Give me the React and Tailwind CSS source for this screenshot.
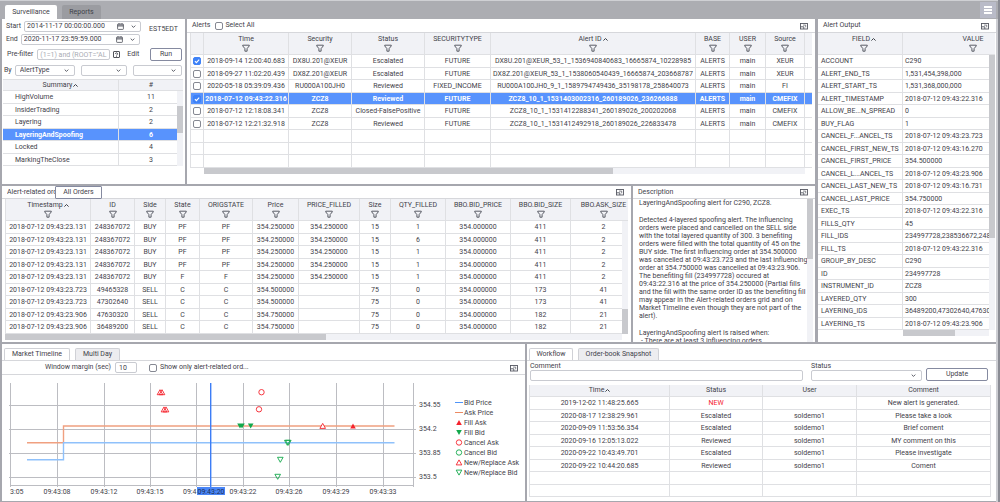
import React from "react";

const summary = [
  ["HighVolume", 11],
  ["InsiderTrading", 2],
  ["Layering", 2],
  ["LayeringAndSpoofing", 6],
  ["Locked", 4],
  ["MarkingTheClose", 3],
];

const alerts = [
  ["2018-09-14 12:00:40.683", "DX8U.201@XEUR", "Escalated", "FUTURE", "DX8U.201@XEUR_53_1_1536940840683_16665874_10228985", "ALERTS", "main", "XEUR"],
  ["2018-09-27 11:02:20.439", "DX8Z.201@XEUR", "Escalated", "FUTURE", "DX8Z.201@XEUR_53_1_1538060540439_16665874_203668787", "ALERTS", "main", "XEUR"],
  ["2020-05-18 05:39:09.436", "RU000A100JH0", "Reviewed", "FIXED_INCOME", "RU000A100JH0_9_1_1589794749436_35198178_258640073", "ALERTS", "main", "FI"],
  ["2018-07-12 09:43:22.316", "ZCZ8", "Reviewed", "FUTURE", "ZCZ8_10_1_1531403002316_260189026_236266888", "ALERTS", "main", "CMEFIX"],
  ["2018-07-12 12:18:08.341", "ZCZ8", "Closed-FalsePositive", "FUTURE", "ZCZ8_10_1_1531412288341_260189026_200202068", "ALERTS", "main", "CMEFIX"],
  ["2018-07-12 12:21:32.918", "ZCZ8", "Reviewed", "FUTURE", "ZCZ8_10_1_1531412492918_260189026_226833478", "ALERTS", "main", "CMEFIX"],
];

const output = [
  ["ACCOUNT", "C290"],
  ["ALERT_END_TS", "1,531,454,398,000"],
  ["ALERT_START_TS", "1,531,368,000,000"],
  ["ALERT_TIMESTAMP", "2018-07-12 09:43:22.316"],
  ["ALLOW_BE...N_SPREAD", "0"],
  ["BUY_FLAG", "1"],
  ["CANCEL_F...ANCEL_TS", "2018-07-12 09:43:23.723"],
  ["CANCEL_FIRST_NEW_TS", "2018-07-12 09:43:16.270"],
  ["CANCEL_FIRST_PRICE", "354.500000"],
  ["CANCEL_L...ANCEL_TS", "2018-07-12 09:43:23.906"],
  ["CANCEL_LAST_NEW_TS", "2018-07-12 09:43:16.731"],
  ["CANCEL_LAST_PRICE", "354.750000"],
  ["EXEC_TS", "2018-07-12 09:43:22.316"],
  ["FILLS_QTY", "45"],
  ["FILL_IDS", "234997728,238536672,248"],
  ["FILL_TS", "2018-07-12 09:43:22.316"],
  ["GROUP_BY_DESC", "C290"],
  ["ID", "234997728"],
  ["INSTRUMENT_ID", "ZCZ8"],
  ["LAYERED_QTY", "300"],
  ["LAYERING_IDS", "36489200,47302640,47630"],
  ["LAYERING_TS", "2018-07-12 09:43:23.906"],
];

const orders = [
  ["2018-07-12 09:43:23.131", "248367072", "BUY", "PF", "PF", "354.250000", "354.250000", 15, 1, "354.000000", 411, 2],
  ["2018-07-12 09:43:23.131", "248367072", "BUY", "PF", "PF", "354.250000", "354.250000", 15, 6, "354.000000", 411, 2],
  ["2018-07-12 09:43:23.131", "248367072", "BUY", "PF", "PF", "354.250000", "354.250000", 15, 1, "354.000000", 411, 2],
  ["2018-07-12 09:43:23.131", "248367072", "BUY", "PF", "PF", "354.250000", "354.250000", 15, 1, "354.000000", 411, 2],
  ["2018-07-12 09:43:23.131", "248367072", "BUY", "F", "F", "354.250000", "354.250000", 15, 1, "354.000000", 411, 2],
  ["2018-07-12 09:43:23.723", "49465328", "SELL", "C", "C", "354.500000", "", 75, 0, "354.000000", 173, 41],
  ["2018-07-12 09:43:23.723", "47302640", "SELL", "C", "C", "354.500000", "", 75, 0, "354.000000", 173, 41],
  ["2018-07-12 09:43:23.906", "47630320", "SELL", "C", "C", "354.750000", "", 75, 0, "354.000000", 182, 21],
  ["2018-07-12 09:43:23.906", "36489200", "SELL", "C", "C", "354.750000", "", 75, 0, "354.000000", 182, 21],
];

const workflow = [
  ["2019-12-02 11:48:25.665", "NEW", "", "New alert is generated."],
  ["2020-08-17 12:38:29.961", "Escalated", "soldemo1", "Please take a look"],
  ["2020-09-09 11:53:56.354", "Escalated", "soldemo1", "Brief coment"],
  ["2020-09-16 12:05:13.022", "Reviewed", "soldemo1", "MY comment on this"],
  ["2020-09-22 10:43:49.701", "Escalated", "soldemo1", "Please investigate"],
  ["2020-09-22 10:44:20.685", "Reviewed", "soldemo1", "Coment"],
  ["", "", "", ""],
  ["", "", "", ""],
];

const tableCls = "w-full table-fixed border-separate border-spacing-0 whitespace-nowrap";
const thCls = "bg-[#f1f2f6] border-b border-r border-[#dfe0e3] p-0 font-normal text-center align-middle overflow-hidden";
const tdCls = "border-b border-r border-[#dfe0e3] p-0 text-center align-middle leading-[10px] overflow-hidden";
const rowCls = "odd:h-[13px] even:h-[12px]";
const boxCls = "border border-[#c9cbd1] rounded-[2px] bg-white";

function Funnel() {
  return (
    <svg className="w-2 h-2" viewBox="0 0 8 8" fill="none" stroke="#4a4d57" strokeWidth="0.9" strokeLinejoin="round">
      <path d="M0.7 1.2h6.6v0.7L5.1 4.6v2.6H2.9V4.6L0.7 1.9z" />
    </svg>
  );
}

function SortUp() {
  return (
    <svg className="w-[5px] h-[5px]" viewBox="0 0 5 5" fill="none" stroke="#3f424a" strokeWidth="1">
      <path d="M0.4 3.6L2.5 1.5l2.1 2.1" />
    </svg>
  );
}

function Chevron() {
  return (
    <svg className="w-[5px] h-[5px]" viewBox="0 0 5 5" fill="none" stroke="#4a4d57" strokeWidth="0.9">
      <path d="M0.7 1.6L2.5 3.4l1.8-1.8" />
    </svg>
  );
}

function CalendarIcon() {
  return (
    <svg className="w-[7px] h-[7px]" viewBox="0 0 7 7" fill="none" stroke="#4a4d57" strokeWidth="0.8">
      <rect x="0.6" y="1" width="5.8" height="5.4" rx="0.6" />
      <path d="M0.6 2h5.8M0.6 3h5.8M2 0.2v1M5 0.2v1" />
    </svg>
  );
}

function PopOut() {
  return (
    <button aria-label="Pop out" className="ml-auto">
      <svg className="w-2 h-2" viewBox="0 0 8 8" fill="none" stroke="#555862" strokeWidth="0.9">
        <rect x="0.5" y="1.5" width="7" height="5.5" />
        <path d="M3.8 7V4.8H0.6" />
        <path d="M3 3.1h2.7v2.2" strokeWidth="0.7" />
      </svg>
    </button>
  );
}

function Head({ label, sort, filter = true, className = "" }) {
  return (
    <div className={`flex flex-col items-center ${className}`}>
      <span className="flex items-center gap-px leading-[9px]">
        {label}
        {sort && <SortUp />}
      </span>
      {filter && <Funnel />}
    </div>
  );
}

function Tick({ id, checked, label }) {
  return (
    <span className="relative inline-flex w-2 h-2 align-middle">
      <input
        id={id}
        type="checkbox"
        defaultChecked={checked}
        aria-label={label}
        className="peer appearance-none w-2 h-2 border border-[#858892] rounded-[2px] bg-white checked:bg-[#3f82f7] checked:border-[#3f82f7]"
      />
      <svg className="absolute inset-0 hidden peer-checked:block pointer-events-none" viewBox="0 0 8 8" fill="none" stroke="#fff" strokeWidth="1.1">
        <path d="M1.9 4.1l1.5 1.5 2.8-3" />
      </svg>
    </span>
  );
}

function DateField({ id, label, value, className }) {
  return (
    <div className="flex items-center gap-[3px]">
      <label htmlFor={id}>{label}</label>
      <div className={`flex items-center h-[11px] pl-[2px] pr-[4px] ${boxCls} ${className}`}>
        <input id={id} defaultValue={value} className="flex-1 min-w-0 h-[9px] outline-none" />
        <span className="flex items-center gap-[7px] pl-[12px]">
          <CalendarIcon />
          <Chevron />
        </span>
      </div>
    </div>
  );
}

function Dropdown({ id, value = "", label, className = "" }) {
  return (
    <div className={`relative ${className}`}>
      <select id={id} aria-label={label} className={`appearance-none block w-full h-[11px] pl-1 leading-[9px] ${boxCls}`}>
        <option>{value}</option>
      </select>
      <span className="absolute right-[6px] top-[3px] pointer-events-none">
        <Chevron />
      </span>
    </div>
  );
}

function Title({ children, className = "h-[14px]" }) {
  return <div className={`flex shrink-0 items-center pl-[5px] pr-[7px] border-b border-[#d6d7db] ${className}`}>{children}</div>;
}

function SummaryPanel() {
  return (
    <section className="bg-white overflow-hidden">
      <div className="flex pl-1 pt-[2px]">
        <div className="flex flex-col gap-[2px]">
          <DateField id="start" label="Start" value="2014-11-17 00:00:00.000" className="w-[117px]" />
          <DateField id="end" label="End" value="2020-11-17 23:59:59.000" className="w-[119px]" />
        </div>
        <span className="pl-2 pt-[4px]">EST5EDT</span>
      </div>
      <div className="flex items-center pl-[5px] pr-[3px] pt-[3px]">
        <label htmlFor="prefilter">Pre-filter</label>
        <input id="prefilter" disabled value={'(1=1) and (ROOT="AL'} className={`ml-[4px] w-[73px] h-[11px] pl-[2px] text-[#a9abb3] ${boxCls}`} />
        <svg className="ml-[3px] w-[7px] h-[7px]" viewBox="0 0 7 7" fill="none" stroke="#3f424a" strokeWidth="0.9">
          <rect x="0.5" y="0.5" width="6" height="6" rx="0.5" />
          <path d="M2.4 2.9c0-1.4 2.2-1.4 2.2 0 0 .8-1.1.8-1.1 1.6M3.5 5.2v.7" />
        </svg>
        <button className="ml-[7px]">Edit</button>
        <button className="ml-auto w-8 h-[13px] border border-[#858aa0] rounded-[2px] bg-white">Run</button>
      </div>
      <div className="flex items-center gap-[6px] pl-[2px] pr-[3px] pt-[4px]">
        <div className="flex items-center gap-[3px]">
          <label htmlFor="by1">By</label>
          <Dropdown id="by1" value="AlertType" className="w-[60px]" />
        </div>
        <Dropdown id="by2" label="Then by" className="w-[46px]" />
        <Dropdown id="by3" label="Finally by" className="flex-1" />
      </div>
      <div className="pl-px pr-[2px] pt-[3px]">
        <table className={tableCls}>
          <colgroup>
            <col className="w-[116px]" />
            <col />
            <col className="w-[6px]" />
          </colgroup>
          <thead>
            <tr className="h-[12px]">
              <th className={`${thCls} border-t`}><Head label="Summary" sort filter={false} /></th>
              <th colSpan={2} className={`${thCls} border-t border-r-0`}><Head label="#" filter={false} /></th>
            </tr>
          </thead>
          <tbody>
            {summary.map(([name, n], i) => {
              const on = name === "LayeringAndSpoofing";
              return (
                <tr key={name} className={`${rowCls} ${on ? "bg-[#5893fd] text-white font-bold" : ""}`}>
                  <td className={`${tdCls} text-left pl-3`}>{name}</td>
                  <td className={`${tdCls} border-r-0 pl-[6px]`}>{n}</td>
                  {i === 0 && (
                    <td rowSpan={6} className="p-0 pt-[15px] align-top bg-[#f1f2f6]">
                      <div className="h-[27px] bg-[#c8c9cd]" />
                    </td>
                  )}
                </tr>
              );
            })}
          </tbody>
        </table>
      </div>
    </section>
  );
}

function AlertsPanel() {
  const heads = ["Time", "Security", "Status", "SECURITYTYPE", "Alert ID", "BASE", "USER", "Source"];
  return (
    <section className="bg-white overflow-hidden">
      <Title>
        <span>Alerts</span>
        <span className="flex items-center gap-[2px] pl-[5px]">
          <Tick id="all" />
          <label htmlFor="all">Select All</label>
        </span>
        <PopOut />
      </Title>
      <div className="pl-[3px] pr-[3px]">
        <table className={tableCls}>
          <colgroup>
            <col className="w-[14px]" />
            <col className="w-[85px]" />
            <col className="w-[63px]" />
            <col className="w-[73px]" />
            <col className="w-[66px]" />
            <col />
            <col className="w-[34px]" />
            <col className="w-[36px]" />
            <col className="w-[39px]" />
            <col className="w-[7px]" />
          </colgroup>
          <thead>
            <tr className="h-[22px]">
              <th className={`${thCls} border-l`} />
              {heads.map((h) => (
                <th key={h} className={thCls}><Head label={h} sort={h === "Alert ID"} /></th>
              ))}
              <th className={`${thCls} border-r-0`} />
            </tr>
          </thead>
          <tbody>
            {Array.from({ length: 9 }, (_, i) => {
              const row = alerts[i] || Array(8).fill("");
              return (
                <tr key={i} className={`${rowCls} ${i === 3 ? "bg-[#5893fd] text-white font-bold" : ""}`}>
                  <td className={`${tdCls} border-l`}>
                    {alerts[i] && (
                      <span className="flex justify-center">
                        <Tick checked={i === 0 || i === 3} label={`Select alert ${i + 1}`} />
                      </span>
                    )}
                  </td>
                  {row.map((c, j) => (
                    <td key={j} className={tdCls}>{c}</td>
                  ))}
                  <td className={`${tdCls} border-r-0`} />
                </tr>
              );
            })}
          </tbody>
        </table>
        <div className="flex ml-[14px] mr-[7px] h-[6px] bg-[#f1f2f6]">
          <div className="w-[68%] bg-[#c8c9cd]" />
        </div>
      </div>
    </section>
  );
}

function OrdersPanel() {
  const heads = ["Timestamp", "ID", "Side", "State", "ORIGSTATE", "Price", "PRICE_FILLED", "Size", "QTY_FILLED", "BBO.BID_PRICE", "BBO.BID_SIZE"];
  return (
    <section className="bg-white overflow-hidden">
      <Title className="h-[13px]">
        <span className="w-[48px] overflow-hidden whitespace-nowrap">Alert-related ord</span>
        <button className="w-[47px] h-[13px] shrink-0 border border-[#858aa0] rounded-[1px] bg-white">All Orders</button>
        <PopOut />
      </Title>
      <div className="pl-[3px] pr-[3px]">
        <table className={tableCls}>
          <colgroup>
            <col className="w-[86px]" />
            <col className="w-[44px]" />
            <col className="w-[31px]" />
            <col className="w-[34px]" />
            <col className="w-[53px]" />
            <col className="w-[46px]" />
            <col className="w-[61px]" />
            <col className="w-[31px]" />
            <col className="w-[55px]" />
            <col className="w-[65px]" />
            <col className="w-[60px]" />
            <col />
            <col className="w-[6px]" />
          </colgroup>
          <thead>
            <tr className="h-[22px]">
              {heads.map((h, i) => (
                <th key={h} className={`${thCls} first:border-l`}><Head label={h} sort={i === 0} /></th>
              ))}
              <th colSpan={2} className={`${thCls} border-r-0 pl-[8px]`}><Head label="BBO.ASK_SIZE" /></th>
            </tr>
          </thead>
          <tbody>
            {orders.map((row, i) => (
              <tr key={i} className={rowCls}>
                {row.map((c, j) => (
                  <td key={j} className={`${tdCls} first:border-l ${j === 11 ? "border-r-0 pl-[14px]" : ""}`}>{c}</td>
                ))}
                {i === 0 && (
                  <td rowSpan={9} className="p-0 align-bottom bg-[#f1f2f6]">
                    <div className="h-[25px] bg-[#c8c9cd]" />
                  </td>
                )}
              </tr>
            ))}
          </tbody>
        </table>
        <div className="flex mr-[6px] h-[6px] bg-[#f1f2f6]">
          <div className="w-[52%] bg-[#c8c9cd]" />
        </div>
      </div>
    </section>
  );
}

function DescriptionPanel() {
  return (
    <section className="bg-white overflow-hidden">
      <Title className="h-[13px]">
        <span>Description</span>
        <PopOut />
      </Title>
      <div className="flex h-[143px] pr-[2px]">
        <div className="flex-1 min-w-0 pl-[6px] leading-[8px] overflow-hidden whitespace-nowrap">
          <p>LayeringAndSpoofing alert for C290, ZCZ8.</p>
          <p className="mt-[9px]">
            Detected 4-layered spoofing alert. The influencing<br />
            orders were placed and cancelled on the SELL side<br />
            with the total layered quantity of 300. 3 benefiting<br />
            orders were filled with the total quantity of 45 on the<br />
            BUY side. The first influencing order at 354.500000<br />
            was cancelled at 09:43:23.723 and the last influencing<br />
            order at 354.750000 was cancelled at 09:43:23.906.<br />
            The benefiting fill (234997728) occured at<br />
            09:43:22.316 at the price of 354.250000 (Partial fills<br />
            and the fill with the same order ID as the benefiting fill<br />
            may appear in the Alert-related orders grid and on<br />
            Market Timeline even though they are not part of the<br />
            alert).
          </p>
          <p className="mt-[9px]">LayeringAndSpoofing alert is raised when:</p>
          <p className="pl-[2px]">- There are at least 3 influencing orders</p>
        </div>
        <div className="w-[6px] bg-[#f1f2f6]">
          <div className="h-[60px] bg-[#c8c9cd]" />
        </div>
      </div>
    </section>
  );
}

function OutputPanel() {
  return (
    <section className="flex flex-col bg-white overflow-hidden">
      <Title>
        <span>Alert Output</span>
        <PopOut />
      </Title>
      <div className="pr-px">
        <table className={tableCls}>
          <colgroup>
            <col className="w-[85px]" />
            <col />
            <col className="w-[6px]" />
          </colgroup>
          <thead>
            <tr className="h-[22px]">
              <th className={thCls}><Head label="FIELD" sort className="pl-2" /></th>
              <th colSpan={2} className={`${thCls} border-r-0`}><Head label="VALUE" className="pl-[48px]" /></th>
            </tr>
          </thead>
          <tbody>
            {output.map(([k, v], i) => (
              <tr key={k} className={rowCls}>
                <td className="border-b border-r border-[#dfe0e3] p-0 pl-[3px] leading-[10px]">{k}</td>
                <td className="border-b border-[#dfe0e3] p-0 pl-[2px] leading-[10px] overflow-hidden">{v}</td>
                {i === 0 && (
                  <td rowSpan={22} className="p-0 align-top bg-[#f1f2f6]">
                    <div className="h-[183px] bg-[#c8c9cd]" />
                  </td>
                )}
              </tr>
            ))}
          </tbody>
        </table>
        <div className="flex ml-[85px] mr-[6px] h-[6px] bg-[#f1f2f6]">
          <div className="w-[60%] bg-[#c8c9cd]" />
        </div>
      </div>
    </section>
  );
}

const tri = (x, y) => `M${x} ${y - 2.6}l2.8 5h-5.6z`;
const triDown = (x, y) => `M${x} ${y + 2.6}l2.8 -5h-5.6z`;

function TimelineChart() {
  const gridX = [8, 55, 102, 148, 194, 241, 287, 334, 381, 411];
  const gridY = [30, 54, 78, 102];
  const times = [[55, "09:43:08"], [102, "09:43:12"], [148, "09:43:15"], [241, "09:43:22"], [287, "09:43:26"], [334, "09:43:29"], [381, "09:43:33"]];
  const prices = ["354.55", "354.2", "353.85", "353.5"];
  const legend = ["Bid Price", "Ask Price", "Fill Ask", "Fill Bid", "Cancel Ask", "Cancel Bid", "New/Replace Ask", "New/Replace Bid"];
  const red = "#f5222d";
  const green = "#12a84b";
  return (
    <svg className="block w-full" viewBox="0 0 523 126" fontSize="7" fill="#3f424a">
      <g stroke="#bcbdc2" strokeWidth="1">
        {gridX.map((x) => <path key={x} d={`M${x + 0.5} 8V112`} />)}
        {gridY.map((y) => <path key={y} d={`M7 ${y + 0.5}H414`} />)}
        <path d="M8 110.5H412" />
      </g>
      <g fill="none" strokeWidth="1.4">
        <path stroke="#f0a080" d="M25 67.7H61.5V51H392.5" />
        <path stroke="#8fc1fb" d="M25 84.7H61.5V67.7H392.5" />
      </g>
      <g textAnchor="middle">
        {times.map(([x, t]) => <text key={t} x={x} y="119">{t}</text>)}
      </g>
      <text x="8" y="119">3:05</text>
      <text x="181" y="119">09:4</text>
      <rect x="195" y="112" width="28" height="8" fill="#4a86f7" />
      <text x="209" y="119" textAnchor="middle" fill="#1d2f55">09:43:20</text>
      <path d="M208.7 8V112" stroke="#3c7df6" strokeWidth="1.4" />
      {prices.map((p, i) => <text key={p} x="417" y={32 + i * 24}>{p}</text>)}

      <g fill="none" strokeWidth="0.9">
        <path stroke={red} d={tri(158, 17.3) + tri(160, 17.3) + tri(162, 34.5) + tri(164, 34.5)} />
        <path stroke={red} fill="#fff" d={tri(320.7, 51)} />
        <circle cx="259.5" cy="17.2" r="2.7" stroke={red} />
        <circle cx="257" cy="34.3" r="2.7" stroke={red} />
        <path stroke={green} d={triDown(285.3, 67.7) + triDown(286.3, 67.7) + triDown(278.3, 84.7) + triDown(275.7, 101.7)} />
      </g>
      <path fill={red} d={tri(351, 51)} />
      <path fill={green} d={triDown(238, 51) + triDown(240, 51) + triDown(248.7, 51)} />

      {legend.map((l, i) => <text key={l} x="462" y={30 + i * 10}>{l}</text>)}
      <path d="M453 27.5h8" stroke="#4f94f8" />
      <path d="M453 37.5h8" stroke="#ec8a62" />
      <path fill={red} d={tri(457, 47.5)} />
      <path fill={green} d={triDown(457, 57.5)} />
      <g fill="none" strokeWidth="0.9">
        <circle cx="457" cy="67.5" r="2.7" stroke={red} />
        <circle cx="457" cy="77.5" r="2.7" stroke={green} />
        <path stroke={red} d={tri(457, 87.5)} />
        <path stroke={green} d={triDown(457, 97.5)} />
      </g>
    </svg>
  );
}

function Tabs({ tabs }) {
  return (
    <div className="flex gap-[5px] pl-[2px] pt-[4px] border-b border-[#d6d7db]">
      {tabs.map(([name, width], i) => (
        <button
          key={name}
          className={`h-[12px] border border-b-0 border-[#d0d1d6] rounded-t-[2px] ${width} ${i === 0 ? "bg-white" : "bg-[#ededf0]"}`}
        >
          {name}
        </button>
      ))}
    </div>
  );
}

function TimelinePanel() {
  return (
    <section className="bg-white overflow-hidden">
      <Tabs tabs={[["Market Timeline", "w-[66px]"], ["Multi Day", "w-[45px]"]]} />
      <div className="flex items-center h-[14px] pl-[43px] pr-[7px] border-b border-[#d6d7db]">
        <label htmlFor="margin">Window margin (sec)</label>
        <input id="margin" defaultValue="10" className={`ml-[4px] w-[22px] h-[11px] pl-[3px] ${boxCls}`} />
        <span className="flex items-center gap-[3px] pl-[12px]">
          <Tick id="only" />
          <label htmlFor="only">Show only alert-related ord...</label>
        </span>
        <PopOut />
      </div>
      <TimelineChart />
    </section>
  );
}

function WorkflowPanel() {
  const heads = ["Time", "Status", "User", "Comment"];
  return (
    <section className="bg-white overflow-hidden">
      <Tabs tabs={[["Workflow", "w-[44px]"], ["Order-book Snapshot", "w-[81px]"]]} />
      <div className="flex items-end pl-[3px] pr-2 pt-px">
        <div className="flex flex-col flex-1 leading-[8px]">
          <label htmlFor="comment">Comment</label>
          <input id="comment" className={`w-full h-[11px] px-1 ${boxCls}`} />
        </div>
        <div className="flex flex-col w-[111px] ml-2 leading-[8px]">
          <label htmlFor="status">Status</label>
          <Dropdown id="status" />
        </div>
        <button className="w-[62px] h-[13px] ml-1 border border-[#858aa0] rounded-[2px] bg-white">Update</button>
      </div>
      <div className="pl-[2px] pr-[5px] pt-[4px]">
        <table className={tableCls}>
          <colgroup>
            <col className="w-[141px]" />
            <col className="w-[93px]" />
            <col className="w-[94px]" />
            <col />
          </colgroup>
          <thead>
            <tr className="h-[12px]">
              {heads.map((h) => (
                <th key={h} className={`${thCls} first:border-l`}><Head label={h} sort={h === "Time"} filter={false} /></th>
              ))}
            </tr>
          </thead>
          <tbody>
            {workflow.map((row, i) => (
              <tr key={i} className={rowCls}>
                {row.map((c, j) => (
                  <td key={j} className={`${tdCls} first:border-l ${c === "NEW" ? "text-[#f5222d]" : ""}`}>{c}</td>
                ))}
              </tr>
            ))}
          </tbody>
        </table>
      </div>
    </section>
  );
}

export default function App() {
  return (
    <div className="flex flex-col min-h-screen bg-[#a6a7ae] border-r-2 border-[#8a8c94] font-['Roboto',sans-serif] text-[7px] leading-[9px] text-[#3f424a]">
      <header className="flex items-end h-[19px] pl-[5px] pr-[2px] bg-[#acadb2] border-t border-[#cfd0d4]">
        <button className="w-[52px] h-[14px] rounded-t-[2px] bg-white">Surveillance</button>
        <button className="w-[39px] h-[14px] ml-[5px] rounded-t-[2px] bg-[#9b9ca1]">Reports</button>
        <button aria-label="Menu" className="flex flex-col items-center justify-center gap-px self-center w-4 h-4 ml-auto bg-[#b9bbc8]">
          <span className="w-2 h-[2px] bg-white" />
          <span className="w-2 h-[2px] bg-white" />
          <span className="w-2 h-[2px] bg-white" />
        </button>
      </header>
      <main className="flex flex-col flex-1 gap-[2px] pl-[2px] pb-px border-r-2 border-[#cdced3]">
        <div className="grid grid-cols-[minmax(0,813fr)_minmax(0,178fr)] gap-[3px]">
          <div className="flex flex-col gap-[2px]">
            <div className="grid grid-cols-[minmax(0,183fr)_minmax(0,628fr)] gap-[2px] min-h-[165px]">
              <SummaryPanel />
              <AlertsPanel />
            </div>
            <div className="grid grid-cols-[minmax(0,629fr)_minmax(0,182fr)] gap-[2px]">
              <OrdersPanel />
              <DescriptionPanel />
            </div>
          </div>
          <OutputPanel />
        </div>
        <div className="grid grid-cols-[minmax(0,523fr)_minmax(0,469fr)] gap-[2px] flex-1">
          <TimelinePanel />
          <WorkflowPanel />
        </div>
      </main>
    </div>
  );
}
